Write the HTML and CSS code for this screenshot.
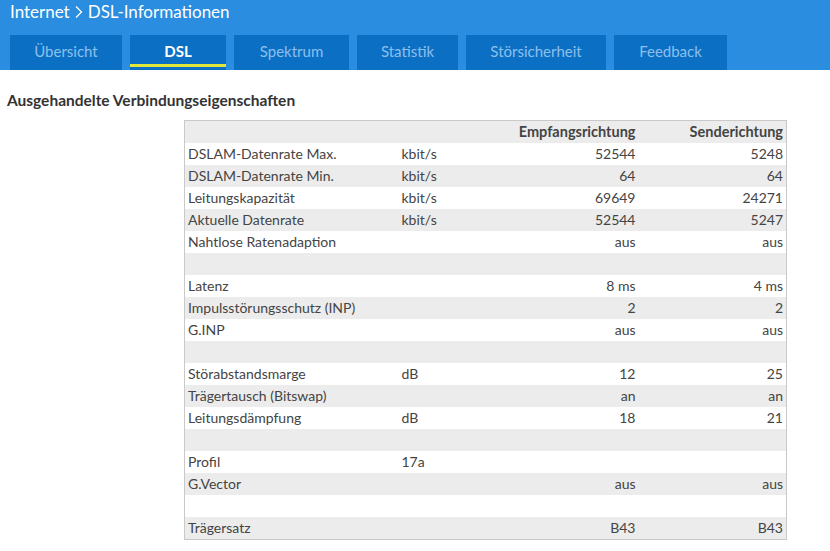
FILE: index.html
```html
<!DOCTYPE html>
<html lang="de">
<head>
<meta charset="utf-8">
<link rel="stylesheet" href="styles.css">
</head>
<body>
<header class="head">
  <h1 class="title">Internet <svg class="chev" width="10" height="14" viewBox="0 0 10 14"><path d="M2 1.5 L7.5 7 L2 12.5" fill="none" stroke="#fff" stroke-width="1.3"/></svg> DSL-Informationen</h1>
  <nav class="tabs">
    <a class="tab t1">Übersicht</a>
    <a class="tab t2 active">DSL</a>
    <a class="tab t3">Spektrum</a>
    <a class="tab t4">Statistik</a>
    <a class="tab t5">Störsicherheit</a>
    <a class="tab t6">Feedback</a>
  </nav>
</header>
<main class="content">
  <h2 class="section">Ausgehandelte Verbindungseigenschaften</h2>
  <table class="info">
    <colgroup><col class="c-label"><col class="c-unit"><col class="c-rx"><col class="c-tx"></colgroup>
    <thead>
      <tr><th></th><th></th><th class="num">Empfangsrichtung</th><th class="num">Senderichtung</th></tr>
    </thead>
    <tbody>
      <tr><td>DSLAM-Datenrate Max.</td><td>kbit/s</td><td class="num">52544</td><td class="num">5248</td></tr>
      <tr><td>DSLAM-Datenrate Min.</td><td>kbit/s</td><td class="num">64</td><td class="num">64</td></tr>
      <tr><td>Leitungskapazität</td><td>kbit/s</td><td class="num">69649</td><td class="num">24271</td></tr>
      <tr><td>Aktuelle Datenrate</td><td>kbit/s</td><td class="num">52544</td><td class="num">5247</td></tr>
      <tr><td>Nahtlose Ratenadaption</td><td></td><td class="num">aus</td><td class="num">aus</td></tr>
      <tr><td></td><td></td><td></td><td></td></tr>
      <tr><td>Latenz</td><td></td><td class="num">8 ms</td><td class="num">4 ms</td></tr>
      <tr><td>Impulsstörungsschutz (INP)</td><td></td><td class="num">2</td><td class="num">2</td></tr>
      <tr><td>G.INP</td><td></td><td class="num">aus</td><td class="num">aus</td></tr>
      <tr><td></td><td></td><td></td><td></td></tr>
      <tr><td>Störabstandsmarge</td><td>dB</td><td class="num">12</td><td class="num">25</td></tr>
      <tr><td>Trägertausch (Bitswap)</td><td></td><td class="num">an</td><td class="num">an</td></tr>
      <tr><td>Leitungsdämpfung</td><td>dB</td><td class="num">18</td><td class="num">21</td></tr>
      <tr><td></td><td></td><td></td><td></td></tr>
      <tr><td>Profil</td><td>17a</td><td class="num"></td><td class="num"></td></tr>
      <tr><td>G.Vector</td><td></td><td class="num">aus</td><td class="num">aus</td></tr>
      <tr><td></td><td></td><td></td><td></td></tr>
      <tr><td>Trägersatz</td><td></td><td class="num">B43</td><td class="num">B43</td></tr>
    </tbody>
  </table>
</main>
</body>
</html>
```
FILE: styles.css
```css
html, body {
  margin: 0;
  padding: 0;
  background: #fff;
  font-family: Lato, "Open Sans", sans-serif;
  color: #444;
}
.head {
  background: #2a8de0;
  height: 70px;
  display: flex;
  flex-direction: column;
}
.title {
  margin: 0;
  padding: 0 0 0 10px;
  height: 35px;
  box-sizing: border-box;
  font-size: 17px;
  font-weight: 400;
  color: #fff;
  line-height: 24px;
  display: flex;
  align-items: flex-start;
  gap: 4px;
}
.chev { display: block; margin-top: 5px; }
.tabs {
  display: flex;
  gap: 8px;
  padding-left: 10px;
  height: 35px;
}
.tab {
  background: #0b6fc4;
  color: #8cc0ec;
  font-size: 15px;
  display: flex;
  align-items: center;
  justify-content: center;
  box-sizing: border-box;
  padding-bottom: 4px;
}
.tab.active {
  color: #fff;
  font-weight: 700;
  box-shadow: inset 0 -3px 0 #e2e63a;
  border-bottom: 3px solid #0b6fc4;
  padding-bottom: 1px;
}
.t1 { width: 112px; }
.t2 { width: 96px; }
.t3 { width: 115px; }
.t4 { width: 101px; }
.t5 { width: 140px; }
.t6 { width: 113px; }
.content {
  padding: 21px 0 0 7px;
}
.section {
  margin: 0 0 10px 0;
  font-size: 15.5px;
  font-weight: 700;
  color: #333;
  line-height: 19px;
}
.info {
  margin-left: 177px;
  border-collapse: collapse;
  border: 1px solid #c9c9c9;
  width: 602px;
  table-layout: fixed;
  font-size: 14px;
  color: #444;
}
.c-label { width: 214px; }
.c-unit { width: 92px; }
.c-rx { width: 148px; }
.c-tx { width: 148px; }
.info th, .info td {
  height: 22px;
  padding: 0 3px;
  line-height: 22px;
  text-align: left;
  white-space: nowrap;
  box-sizing: border-box;
}
.info th { font-weight: 700; color: #444; font-size: 14.5px; }
.info .num { text-align: right; }
.info thead tr { background: #ececec; }
.info tbody tr:nth-child(odd) { background: #fff; }
.info tbody tr:nth-child(even) { background: #ececec; }
```
